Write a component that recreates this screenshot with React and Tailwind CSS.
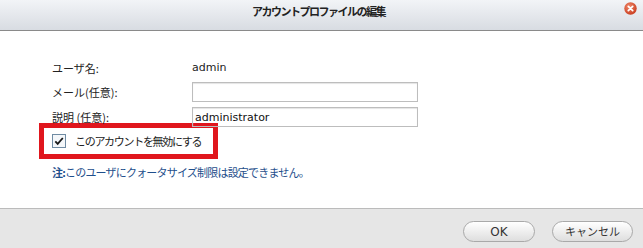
export default function App() {
  const jp = { fontFamily: '"Noto Sans CJK JP", "Noto Sans", sans-serif' };
  const lat = { fontFamily: '"DejaVu Sans", "Noto Sans CJK JP", sans-serif' };
  return (
    <div className="w-[643px] h-[248px] flex flex-col bg-white overflow-hidden" style={jp}>
      <div className="h-[31px] shrink-0 border-b border-[#8a8a8a] bg-gradient-to-b from-[#f2f4f7] to-[#d8dce2] flex items-start">
        <div className="flex-1" />
        <div className="pt-[4px] text-[11px] leading-[14px] font-bold tracking-[-1.5px] text-[#222]">アカウントプロファイルの編集</div>
        <div className="flex-1 flex justify-end pr-[6px] pt-[2px]">
          <svg width="13" height="13" viewBox="0 0 13 13">
            <defs>
              <radialGradient id="cg" cx="40%" cy="35%" r="70%">
                <stop offset="0%" stopColor="#f08a6c" />
                <stop offset="100%" stopColor="#c83a1c" />
              </radialGradient>
            </defs>
            <circle cx="6.5" cy="6.5" r="6.2" fill="url(#cg)" />
            <path d="M4.3 4.3 L8.7 8.7 M8.7 4.3 L4.3 8.7" stroke="#fff" strokeWidth="1.7" strokeLinecap="round" />
          </svg>
        </div>
      </div>
      <div className="flex-1 bg-white pt-[27px] pl-[52px] text-[11px] text-[#222]">
        <div className="grid grid-cols-[140px_226px] items-center">
          <div className="h-[20px] leading-[20px]">ユーザ名:</div>
          <div className="h-[20px] leading-[20px] text-[11px]" style={lat}>admin</div>
          <div className="mt-[4px] leading-[20px]">メール(任意):</div>
          <input className="mt-[4px] h-[20px] w-[226px] border border-[#bdbdbd] shadow-[inset_0_1px_1px_#e4e4e4] outline-none px-[2px] text-[11px]" style={lat} defaultValue="" />
          <div className="mt-[5px] leading-[20px]">説明 (任意):</div>
          <input className="mt-[5px] h-[20px] w-[226px] border border-[#bdbdbd] shadow-[inset_0_1px_1px_#e4e4e4] outline-none px-[2px] text-[11px] text-[#111]" style={lat} defaultValue="administrator" />
        </div>
        <div className="ml-[-13px] mt-[-4px] w-[179px] h-[36px] border-[5px] border-[#e0161d] flex items-center pl-[8px]">
          <div className="w-[14px] h-[14px] border border-[#6f8ba3] bg-[#f4f7fa] flex items-center justify-center">
            <svg width="12" height="12" viewBox="0 0 12 12">
              <path d="M2.3 6.3 L4.7 8.8 L9.8 3" fill="none" stroke="#1a1a1a" strokeWidth="1.8" />
            </svg>
          </div>
          <div className="ml-[9px] text-[11px] tracking-[-1.3px]">このアカウントを無効にする</div>
        </div>
        <div className="mt-[5px] text-[11px] tracking-[-0.8px] text-[#1f4f8c]">
          <span className="font-bold">注:</span>このユーザにクォータサイズ制限は設定できません。
        </div>
      </div>
      <div className="h-[40px] shrink-0 border-t border-[#bbbbbb] bg-[#e6e6e6] flex justify-end items-start pt-[12px] pr-[10px] gap-[17px]">
        <button className="w-[72px] h-[21px] rounded-full border border-[#a9a9a9] bg-gradient-to-b from-[#ffffff] to-[#dedede] text-[12px] text-[#333]" style={lat}>OK</button>
        <button className="w-[81px] h-[21px] rounded-full border border-[#a9a9a9] bg-gradient-to-b from-[#ffffff] to-[#dedede] text-[11px] text-[#333]">キャンセル</button>
      </div>
    </div>
  );
}
